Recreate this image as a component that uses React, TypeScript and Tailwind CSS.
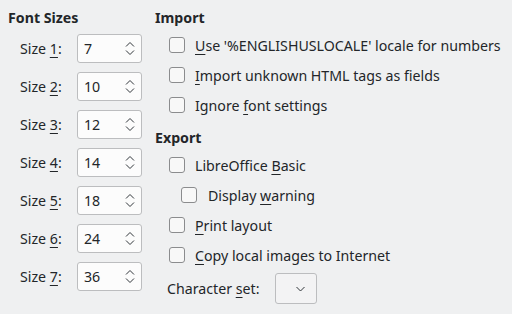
import React from 'react';

const U = ({ children }: { children: React.ReactNode }) => (
    <span className="underline underline-offset-[3px] decoration-1">{children}</span>
);

const SpinBox = ({ value }: { value: number }) => (
    <div className="w-[65px] h-[29px] bg-[#fcfcfc] border border-[#bcbdbf] rounded-[3px] flex items-center justify-between pl-[6px] pr-[6px]">
        <span>{value}</span>
        <svg width="10" height="17" viewBox="0 0 10 17" fill="none" stroke="#31363b" strokeWidth="1">
            <path d="M1 6.5 L5 2.5 L9 6.5" />
            <path d="M1 10.5 L5 14.5 L9 10.5" />
        </svg>
    </div>
);

const CheckRow = ({ children, indent = false }: { children: React.ReactNode; indent?: boolean }) => (
    <div className={`h-[30px] flex items-center ${indent ? 'pl-[26px]' : 'pl-[14px]'}`}>
        <div className="w-[16px] h-[16px] rounded-[3px] border border-[#8b8c8e] bg-[#f8f8f8]" />
        <span className={indent ? 'ml-[11px]' : 'ml-[10px]'}>{children}</span>
    </div>
);

const sizes = [7, 10, 12, 14, 18, 24, 36];

export default function App() {
    return (
        <div
            className="w-[512px] h-[314px] bg-[#eff0f1] text-[#232629] text-[14.2px] leading-[19px] flex overflow-hidden"
            style={{ fontFamily: '"Noto Sans", sans-serif' }}
        >
            {/* Font sizes */}
            <div className="w-[155px] pl-[8px] pt-[8px] flex flex-col">
                <div className="font-bold">Font Sizes</div>
                <div className="mt-[7px] flex flex-col gap-[9px] pl-[12px]">
                    {sizes.map((s, i) => (
                        <div key={s} className="flex items-center">
                            <span className="w-[57px]">
                                Size <U>{i + 1}</U>:
                            </span>
                            <SpinBox value={s} />
                        </div>
                    ))}
                </div>
            </div>

            {/* Import / Export */}
            <div className="flex-1 pt-[8px] flex flex-col">
                <div className="font-bold">Import</div>
                <div className="mt-[3px]">
                    <CheckRow><U>U</U>se '%ENGLISHUSLOCALE' locale for numbers</CheckRow>
                    <CheckRow><U>I</U>mport unknown HTML tags as fields</CheckRow>
                    <CheckRow>Ignore <U>f</U>ont settings</CheckRow>
                </div>
                <div className="font-bold mt-[8px]">Export</div>
                <div className="mt-[3px]">
                    <CheckRow>LibreOffice <U>B</U>asic</CheckRow>
                    <CheckRow indent>Display <U>w</U>arning</CheckRow>
                    <CheckRow><U>P</U>rint layout</CheckRow>
                    <CheckRow><U>C</U>opy local images to Internet</CheckRow>
                </div>
                <div className="mt-[3px] pl-[12px] flex items-center">
                    <span className="w-[108px]">Character <U>s</U>et:</span>
                    <div className="w-[42px] h-[31px] bg-[#f3f3f4] border border-[#bcbdbf] rounded-[3px] flex items-center justify-end pr-[11px]">
                        <svg width="9" height="6" viewBox="0 0 9 6" fill="none" stroke="#31363b" strokeWidth="1">
                            <path d="M0.5 1 L4.5 5 L8.5 1" />
                        </svg>
                    </div>
                </div>
            </div>
        </div>
    );
}
